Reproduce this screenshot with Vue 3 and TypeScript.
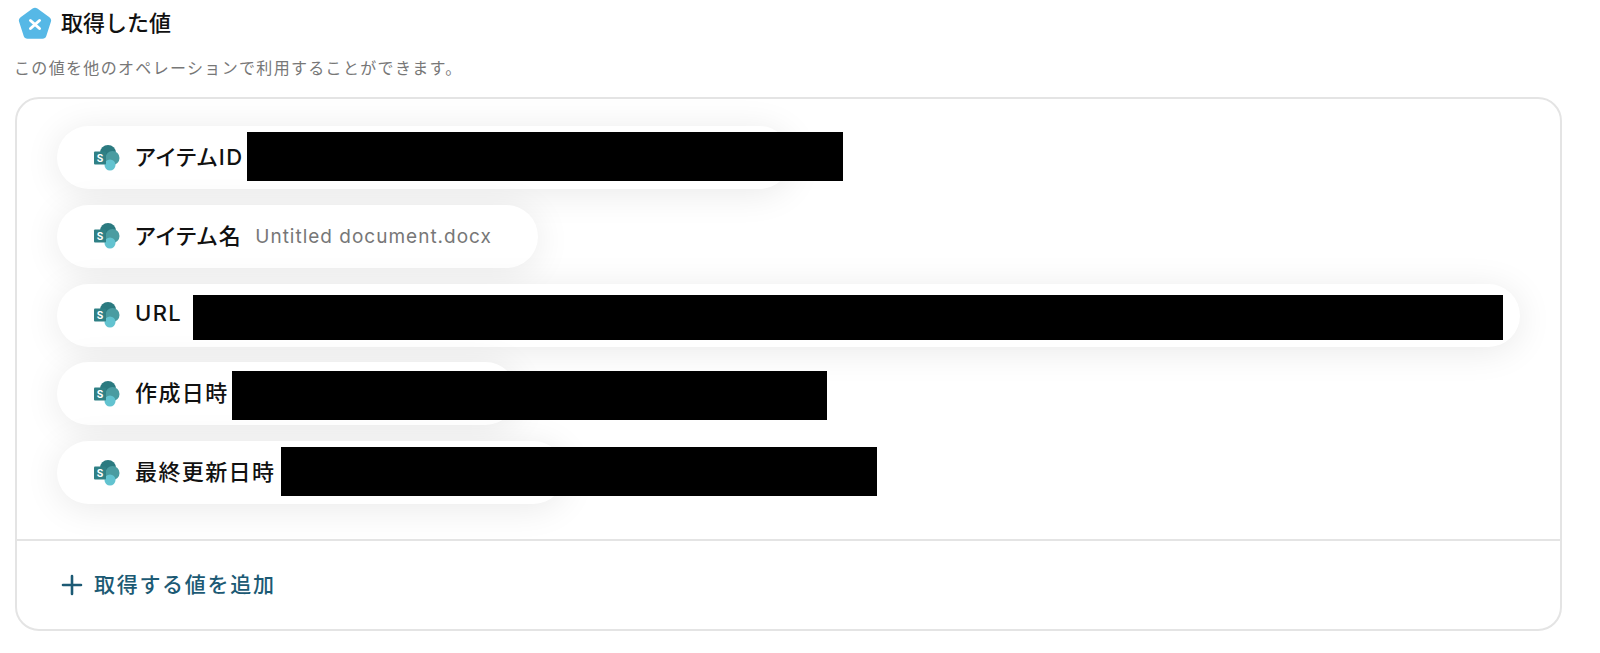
<script setup lang="ts">
interface Field {
  label: string
  value?: string
  width: number
  bar?: { left: number; width: number; top: number; height: number }
}

const fields: Field[] = [
  { label: 'アイテムID', width: 734, bar: { left: 190, width: 596, top: 6, height: 49 } },
  { label: 'アイテム名', value: 'Untitled document.docx', width: 481 },
  { label: 'URL', width: 1463, bar: { left: 136, width: 1310, top: 11, height: 45 } },
  { label: '作成日時', width: 460, bar: { left: 175, width: 595, top: 9, height: 49 } },
  { label: '最終更新日時', width: 508, bar: { left: 224, width: 596, top: 6, height: 49 } }
]
</script>

<template>
  <div class="page">
    <div class="heading">
      <svg class="badge" width="34" height="33" viewBox="0 0 34 33">
        <path
          d="M14.6 1.6a4 4 0 0 1 4.8 0l12 8.7a4 4 0 0 1 1.5 4.5l-4.6 14.1a4 4 0 0 1-3.8 2.8H9.500a4 4 0 0 1-3.800-2.800L1.100 14.800a4 4 0 0 1 1.500-4.500z"
          fill="#56b8e6"
        />
        <path d="M12.500 13.500l9 8M21.500 13.500l-9 8" stroke="#fff" stroke-width="3" stroke-linecap="round" />
      </svg>
      <h2 class="title">取得した値</h2>
    </div>
    <p class="note">この値を他のオペレーションで利用することができます。</p>

    <div class="card">
      <div class="list">
        <div v-for="f in fields" :key="f.label" class="pill" :style="{ width: f.width + 'px' }">
          <svg class="sp" width="28" height="28" viewBox="0 0 28 28">
            <circle cx="15" cy="9" r="8" fill="#2b7a80" />
            <circle cx="19.500" cy="14" r="7" fill="#4a9ca1" />
            <circle cx="17" cy="21" r="5.500" fill="#62c3d0" />
            <rect x="1" y="7.500" width="12" height="13" rx="1" fill="#2f8085" />
            <text x="7" y="17.500" class="sp-letter">S</text>
          </svg>
          <span class="label">{{ f.label }}</span>
          <span v-if="f.value" class="value">{{ f.value }}</span>
          <div
            v-if="f.bar"
            class="redact"
            :style="{ left: f.bar.left + 'px', width: f.bar.width + 'px', top: f.bar.top + 'px', height: f.bar.height + 'px' }"
          />
        </div>
      </div>
      <div class="footer">
        <svg width="22" height="22" viewBox="0 0 22 22">
          <path d="M11 2v18M2 11h18" stroke="#1c5a74" stroke-width="2.600" stroke-linecap="round" />
        </svg>
        <span class="add">取得する値を追加</span>
      </div>
    </div>
  </div>
</template>

<style>
html,
body {
  background: #fff;
}
</style>

<style scoped>
.page {
  width: 1600px;
  height: 653px;
  padding: 6px 38px 0 15px;
  box-sizing: border-box;
  overflow: hidden;
  font-family: Inter, 'Noto Sans CJK JP', sans-serif;
  color: #111;
}
.heading {
  display: flex;
  align-items: center;
  gap: 9px;
  padding-left: 3px;
  height: 34px;
}
.title {
  margin: 0;
  font-size: 22px;
  font-weight: 500;
  line-height: 34px;
}
.note {
  margin: 16px 0 0 -1px;
  font-size: 16px;
  letter-spacing: 1.33px;
  line-height: 24px;
  color: #777;
}
.card {
  margin-top: 17px;
  width: 1547px;
  height: 534px;
  box-sizing: border-box;
  border: 2px solid #e4e4e4;
  border-radius: 24px;
  overflow: hidden;
  background: #fff;
}
.list {
  height: 442px;
  padding: 27px 0 0 40px;
  box-sizing: border-box;
  display: flex;
  flex-direction: column;
  gap: 15.8px;
  overflow: hidden;
  border-bottom: 2px solid #e4e4e4;
}
.pill {
  position: relative;
  flex: none;
  height: 63px;
  box-sizing: border-box;
  display: flex;
  align-items: center;
  padding-left: 36px;
  background: #fff;
  border-radius: 32px;
  box-shadow: 0 4px 36px rgba(0, 0, 0, 0.09);
}
.sp {
  flex: none;
  margin-right: 14px;
}
.sp-letter {
  font-family: Inter, sans-serif;
  font-size: 10px;
  font-weight: 700;
  fill: #fff;
  text-anchor: middle;
}
.label {
  padding-bottom: 5px;
  font-size: 22px;
  font-weight: 500;
  letter-spacing: 1.4px;
  font-feature-settings: 'palt';
  white-space: nowrap;
}
.value {
  margin-left: 13px;
  font-size: 19px;
  letter-spacing: 1px;
  color: #777;
  white-space: nowrap;
}
.redact {
  position: absolute;
  background: #000;
}
.footer {
  display: flex;
  align-items: center;
  gap: 11px;
  height: 88px;
  padding-left: 44px;
}
.add {
  padding-bottom: 5px;
  font-size: 21px;
  font-weight: 500;
  letter-spacing: 1.7px;
  color: #1c5a74;
}
</style>
